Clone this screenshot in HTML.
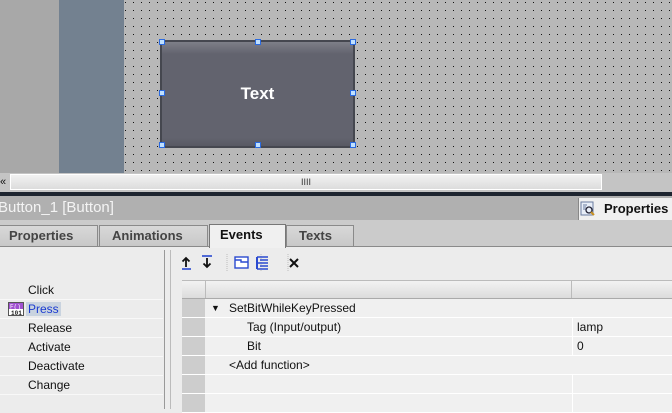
<!DOCTYPE html>
<html><head><style>
*{margin:0;padding:0;box-sizing:border-box}
body{width:672px;height:409px;overflow:hidden;position:relative;background:#ececec;font-family:"Liberation Sans",sans-serif;font-size:12px;color:#111}
.a{position:absolute}
.h{position:absolute;width:6px;height:6px;background:#bfe0ff;border:1px solid #2a6ae0}
.tab{position:absolute;top:225px;height:21px;border:1px solid #8a8a8a;border-bottom:none;background:linear-gradient(#d8d8d8,#c8c8c8);color:#444;font-weight:bold;font-size:13px;text-align:left;padding-left:10px;line-height:20px}
.li{position:absolute;left:0;width:163px;height:19px;border-bottom:1px solid #f8f8f8;line-height:18px;padding-left:28px;color:#111}
.row{position:absolute;left:182px;width:490px;height:19px;border-bottom:1px solid #fff;line-height:18px}
.row .c{position:absolute;left:0;top:0;width:23px;height:18px;background:#cdcdcd}
.row .v{position:absolute;left:390px;top:0;height:18px;border-left:1px solid #fff;padding-left:4px}
</style></head><body>
<div class="a" style="left:0;top:0;width:59px;height:173px;background:#a8a8a8"></div>
<div class="a" style="left:59px;top:0;width:65px;height:173px;background:#738190"></div>
<svg class="a" style="left:124px;top:0" width="548" height="173">
<defs><pattern id="p" x="1" y="2" width="8" height="8" patternUnits="userSpaceOnUse"><rect width="1" height="1" fill="#111"/></pattern></defs>
<rect width="548" height="173" fill="#b8b8b8"/><rect width="548" height="173" fill="url(#p)"/></svg>
<div class="a" style="left:160px;top:40px;width:195px;height:108px;border:2px solid #45474f;background:linear-gradient(#7e7f88 0,#62636e 12px,#62636e 92%,#585963);color:#fff;font-weight:bold;font-size:17px;text-align:center;line-height:104px">Text</div>
<div class="h" style="left:159px;top:39px"></div><div class="h" style="left:255px;top:39px"></div><div class="h" style="left:350px;top:39px"></div>
<div class="h" style="left:159px;top:90px"></div><div class="h" style="left:350px;top:90px"></div>
<div class="h" style="left:159px;top:142px"></div><div class="h" style="left:255px;top:142px"></div><div class="h" style="left:350px;top:142px"></div>
<div class="a" style="left:0;top:173px;width:672px;height:19px;background:#c4c4c4"></div>
<div class="a" style="left:0;top:174px;width:8px;height:16px;font-size:11px;line-height:16px">«</div>
<div class="a" style="left:10px;top:174px;width:592px;height:16px;background:linear-gradient(#f2f2f2,#dcdcdc);border:1px solid #fff;text-align:center;font-size:9px;line-height:14px;color:#333">IIII</div>
<div class="a" style="left:0;top:192px;width:672px;height:4px;background:#1e2530"></div>
<div class="a" style="left:0;top:196px;width:672px;height:24px;background:#b0b0b0"></div>
<div class="a" style="left:-2px;top:196px;height:24px;color:#f4f4f4;font-size:15px;line-height:24px">Button_1 [Button]</div>
<div class="a" style="left:578px;top:198px;width:94px;height:22px;background:#f0f0f0;border-left:1px solid #888;font-weight:bold;font-size:13px;line-height:22px;padding-left:25px">Properties</div>
<svg class="a" style="left:580px;top:201px" width="16" height="16"><rect x="1" y="1" width="12" height="13" fill="#e8eef8" stroke="#6a7ca0"/><path d="M3 4h4M3 6h3M3 8h3" stroke="#6a7ca0"/><circle cx="9" cy="9" r="3" fill="none" stroke="#223" stroke-width="1.3"/><path d="M11 11l3 3" stroke="#c89020" stroke-width="2"/></svg>
<div class="a" style="left:0;top:220px;width:672px;height:27px;background:#cbcbcb;border-bottom:1px solid #8a8a8a"></div>
<div class="tab" style="left:-2px;width:100px">Properties</div>
<div class="tab" style="left:99px;width:109px;padding-left:12px">Animations</div>
<div class="tab" style="left:209px;width:77px;top:224px;height:24px;background:#f0f0f0;color:#111;border-color:#777;padding-left:10px">Events</div>
<div class="tab" style="left:286px;width:68px;padding-left:12px">Texts</div>
<div class="a" style="left:0;top:248px;width:672px;height:161px;background:#ececec"></div>
<div class="a" style="left:164px;top:250px;width:1px;height:159px;background:#999"></div>
<div class="a" style="left:170px;top:250px;width:1px;height:159px;background:#bbb"></div>
<div class="li" style="top:281px">Click</div>
<div class="li" style="top:300px"><span style="background:#c9d3df;color:#1a3ad0;padding:0 2px;margin-left:-2px">Press</span></div>
<svg class="a" style="left:8px;top:302px" width="16" height="14"><rect x="0.5" y="0.5" width="15" height="13" fill="#fff" stroke="#555"/><rect x="1" y="1" width="14" height="6" fill="#a050d0"/><text x="2" y="6.5" font-size="6" fill="#fff" font-family="Liberation Mono">F()</text><text x="3" y="13" font-size="6" fill="#222" font-family="Liberation Mono" font-weight="bold">101</text></svg>
<div class="li" style="top:319px">Release</div>
<div class="li" style="top:338px">Activate</div>
<div class="li" style="top:357px">Deactivate</div>
<div class="li" style="top:376px">Change</div>
<svg class="a" style="left:180px;top:252px" width="130" height="22">
<path d="M6 6v9M2.5 9.5L6 6l3.5 3.5" stroke="#111" stroke-width="1.8" fill="none"/><path d="M2 17h9" stroke="#2a4ad0" stroke-width="1.6"/>
<path d="M27 6v9M23.5 11.5L27 15l3.5-3.5" stroke="#111" stroke-width="1.8" fill="none"/><path d="M22 4h10" stroke="#2a4ad0" stroke-width="1.6"/>
<path d="M47 2v18M81 2v18M108 2v18" stroke="#bbb" stroke-dasharray="1 1"/>
<rect x="55" y="5" width="13" height="11" fill="#fff" stroke="#2a4ad0" stroke-width="1.4"/><path d="M55 8h6v2h7" stroke="#2a4ad0" stroke-width="1.4" fill="none"/>
<path d="M77 5h11M80 8h8M77 11h11M80 14h8M77 17h11" stroke="#2a4ad0" stroke-width="1.6"/><path d="M77 5v12" stroke="#2a4ad0" stroke-width="2"/>
<path d="M110 7l8 8M118 7l-8 8" stroke="#111" stroke-width="2"/></svg>
<div class="a" style="left:182px;top:280px;width:490px;height:19px;background:linear-gradient(#f2f2f2,#dcdcdc);border-top:1px solid #bbb;border-bottom:1px solid #aaa"></div>
<div class="a" style="left:205px;top:281px;width:1px;height:17px;background:#bbb"></div>
<div class="a" style="left:571px;top:281px;width:1px;height:17px;background:#bbb"></div>
<div class="row" style="top:299px;background:#f0f0f0"><div class="c"></div><span style="position:absolute;left:29px;font-size:9px">▼</span><span style="position:absolute;left:47px">SetBitWhileKeyPressed</span></div>
<div class="row" style="top:318px;background:#f0f0f0"><div class="c"></div><span style="position:absolute;left:65px">Tag (Input/output)</span><div class="v">lamp</div></div>
<div class="row" style="top:337px;background:#f0f0f0"><div class="c"></div><span style="position:absolute;left:65px">Bit</span><div class="v">0</div></div>
<div class="row" style="top:356px;background:#f0f0f0"><div class="c"></div><span style="position:absolute;left:47px">&lt;Add function&gt;</span></div>
<div class="row" style="top:375px;background:#f0f0f0"><div class="c"></div><div class="v">&nbsp;</div></div>
<div class="row" style="top:394px;background:#f0f0f0"><div class="c"></div><div class="v">&nbsp;</div></div>
</body></html>
